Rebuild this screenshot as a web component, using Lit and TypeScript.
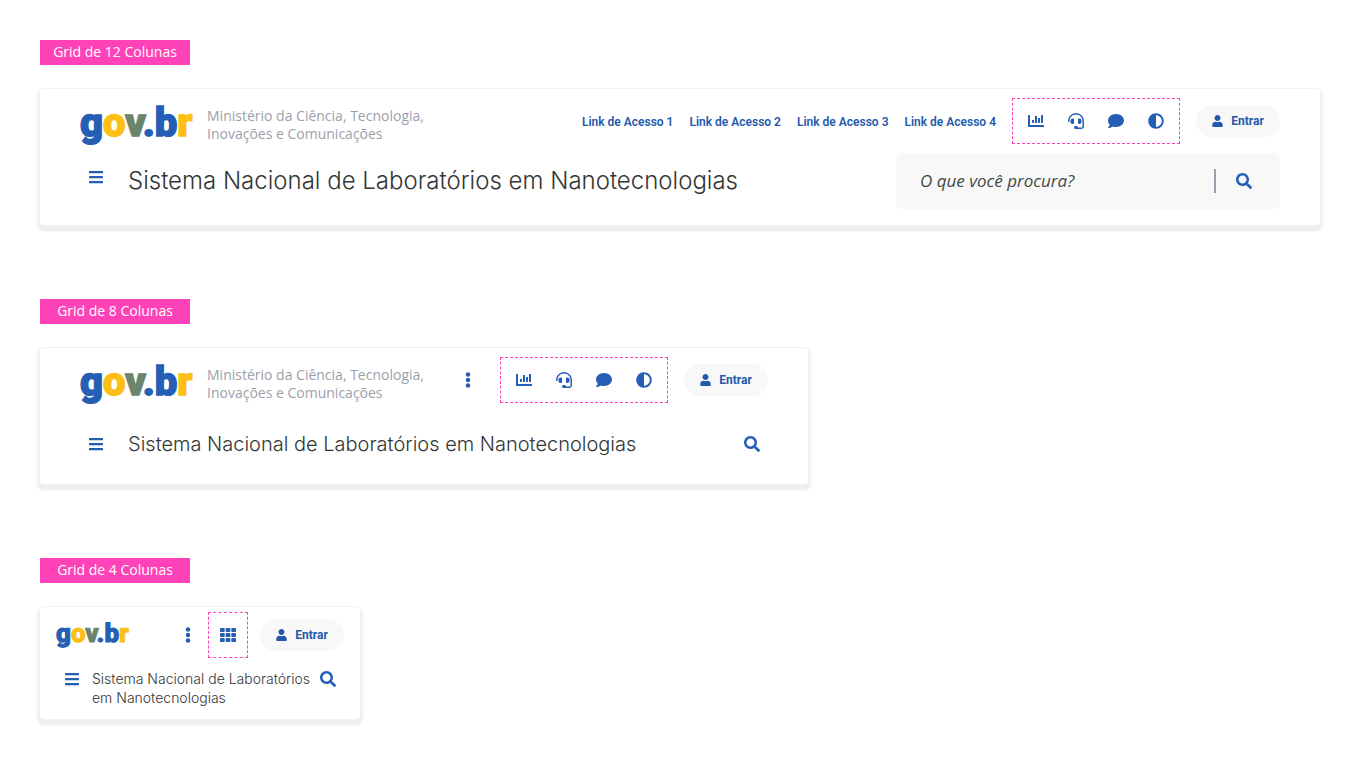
import { LitElement, html, css, svg } from "lit";
import { customElement, property } from "lit/decorators.js";
import { classMap } from "lit/directives/class-map.js";

type IconName =
  | "bars" | "dots" | "chart" | "headset" | "comment"
  | "contrast" | "user" | "search" | "grid";

const ICONS: Record<IconName, { width: number; shape: unknown }> = {
  bars: {
    width: 448,
    shape: svg`<rect y="60" width="448" height="72" rx="16"/><rect y="220" width="448" height="72" rx="16"/><rect y="380" width="448" height="72" rx="16"/>`,
  },
  dots: {
    width: 192,
    shape: svg`<circle cx="96" cy="80" r="72"/><circle cx="96" cy="256" r="72"/><circle cx="96" cy="432" r="72"/>`,
  },
  chart: {
    width: 512,
    shape: svg`<path d="M332.8 320h38.4c6.4 0 12.8-6.4 12.8-12.8V172.8c0-6.4-6.4-12.8-12.8-12.8h-38.4c-6.4 0-12.8 6.4-12.8 12.8v134.4c0 6.4 6.4 12.8 12.8 12.8zm96 0h38.4c6.4 0 12.8-6.4 12.8-12.8V76.8c0-6.4-6.4-12.8-12.8-12.8h-38.4c-6.4 0-12.8 6.4-12.8 12.8v230.4c0 6.4 6.4 12.8 12.8 12.8zm-288 0h38.4c6.4 0 12.8-6.4 12.8-12.8v-70.4c0-6.4-6.4-12.8-12.8-12.8h-38.4c-6.4 0-12.8 6.4-12.8 12.8v70.4c0 6.4 6.4 12.8 12.8 12.8zm96 0h38.4c6.4 0 12.8-6.4 12.8-12.8V108.8c0-6.4-6.4-12.8-12.8-12.8h-38.4c-6.4 0-12.8 6.4-12.8 12.8v198.4c0 6.4 6.4 12.8 12.8 12.8zM496 384H64V80c0-8.84-7.16-16-16-16H16C7.16 64 0 71.16 0 80v336c0 17.67 14.33 32 32 32h464c8.84 0 16-7.16 16-16v-32c0-8.84-7.16-16-16-16z"/>`,
  },
  headset: {
    width: 512,
    shape: svg`<path d="M192 208c0-17.67-14.33-32-32-32h-16c-35.35 0-64 28.65-64 64v48c0 35.35 28.65 64 64 64h16c17.67 0 32-14.33 32-32V208zm176 144c35.35 0 64-28.65 64-64v-48c0-35.35-28.65-64-64-64h-16c-17.67 0-32 14.33-32 32v112c0 17.67 14.33 32 32 32h16zM256 0C113.18 0 4.58 118.83 0 256v16c0 8.84 7.16 16 16 16h16c8.84 0 16-7.16 16-16v-16c0-114.69 93.31-208 208-208s208 93.31 208 208h-.12c.08 2.43.12 165.72.12 165.72 0 23.35-18.93 42.28-42.28 42.28H320c0-26.51-21.49-48-48-48h-32c-26.51 0-48 21.49-48 48s21.49 48 48 48h181.72c49.86 0 90.28-40.42 90.28-90.28V256C507.42 118.83 398.82 0 256 0z"/>`,
  },
  comment: {
    width: 512,
    shape: svg`<path d="M256 32C114.6 32 0 125.1 0 240c0 49.6 21.4 95 57 130.7C44.5 421.1 2.7 466 2.2 466.5c-2.2 2.3-2.8 5.7-1.5 8.7S4.8 480 8 480c66.3 0 116-31.8 140.6-51.4 32.7 12.3 69 19.4 107.4 19.4 141.4 0 256-93.1 256-208S397.4 32 256 32z"/>`,
  },
  contrast: {
    width: 512,
    shape: svg`<path d="M8 256c0 136.966 111.033 248 248 248s248-111.034 248-248S392.966 8 256 8 8 119.033 8 256zm248 184V72c101.705 0 184 82.311 184 184 0 101.705-82.311 184-184 184z"/>`,
  },
  user: {
    width: 448,
    shape: svg`<path d="M224 256c70.7 0 128-57.3 128-128S294.7 0 224 0 96 57.3 96 128s57.3 128 128 128zm89.6 32h-16.7c-22.2 10.2-46.9 16-72.9 16s-50.6-5.8-72.9-16h-16.7C60.2 288 0 348.2 0 422.4V464c0 26.5 21.5 48 48 48h352c26.5 0 48-21.5 48-48v-41.6c0-74.2-60.2-134.4-134.4-134.4z"/>`,
  },
  search: {
    width: 512,
    shape: svg`<path d="M505 442.7L405.3 343c-4.5-4.5-10.6-7-17-7H372c27.6-35.3 44-79.7 44-128C416 93.1 322.9 0 208 0S0 93.1 0 208s93.1 208 208 208c48.3 0 92.7-16.4 128-44v16.3c0 6.4 2.5 12.5 7 17l99.7 99.7c9.4 9.4 24.6 9.4 33.9 0l28.3-28.3c9.4-9.4 9.4-24.6.1-34zM208 336c-70.7 0-128-57.2-128-128 0-70.7 57.2-128 128-128 70.7 0 128 57.2 128 128 0 70.7-57.2 128-128 128z"/>`,
  },
  grid: {
    width: 512,
    shape: [32, 192, 352].map((y) =>
      [0, 181, 362].map((x) => svg`<rect x=${x} y=${y} width="150" height="128" rx="24"/>`)
    ),
  },
};

const icon = (name: IconName) => html`<svg
  class="icon icon-${name}"
  viewBox="0 0 ${ICONS[name].width} 512"
  aria-hidden="true"
>${ICONS[name].shape}</svg>`;

const iconButton = (name: IconName, label: string) =>
  html`<button class="icon-button" type="button" aria-label=${label}>${icon(name)}</button>`;

const TITLE = "Sistema Nacional de Laboratórios em Nanotecnologias";
const LINKS = [1, 2, 3, 4].map((n) => `Link de Acesso ${n}`);

@customElement("gov-logo")
export class GovLogo extends LitElement {
  static styles = css`
    :host { display: block; aspect-ratio: 111 / 40; }
    .mark { display: block; width: 100%; height: 100%; overflow: visible; }
    .letters {
      font: 900 40px Roboto, "Liberation Sans", sans-serif;
      stroke-width: 1.4;
      text-rendering: geometricPrecision;
    }
    .blue { fill: #255fb5; stroke: #255fb5; }
    .yellow { fill: #fdbf16; stroke: #fdbf16; }
    .green { fill: #6a856c; stroke: #6a856c; }
  `;

  render() {
    return html`<svg class="mark" viewBox="0 0 111 40" role="img" aria-label="gov.br">
      <text class="letters" x="0" y="31"
        ><tspan class="blue">g</tspan
        ><tspan class="yellow">o</tspan
        ><tspan class="green">v</tspan
        ><tspan class="blue">.b</tspan
        ><tspan class="yellow">r</tspan
      ></text>
    </svg>`;
  }
}

@customElement("site-header")
export class SiteHeader extends LitElement {
  @property() size: "large" | "medium" | "small" = "large";

  static styles = css`
    :host { display: block; }
    * { box-sizing: border-box; }
    .card {
      padding: 8px 40px 16px;
      border-radius: 4px;
      background: #fff;
      box-shadow: 0 0 0 1px #f2f2f2, 0 4px 0 2px #efefef, 0 3px 1px 4px #f8f8f8;
    }
    .top, .bottom, .brand, .actions, .links, .tools, .sign-in, .search, .icon-button {
      display: flex;
      align-items: center;
    }
    .top { min-height: 48px; justify-content: space-between; gap: 16px; }
    .brand { gap: 16px; align-self: flex-end; }
    .logo { width: 111px; }
    .ministry { margin: 0; font-size: 14px; line-height: 18px; color: #9b9fab; }
    .actions, .links { gap: 16px; }
    .link {
      padding-top: 2px;
      font: 600 12px/16px Roboto, sans-serif;
      color: #2359ab;
      text-decoration: none;
      white-space: nowrap;
    }
    .tools { height: 46px; padding: 0 7px; gap: 8px; border: 1px dashed #ff42b8; }
    .icon-button {
      flex: none;
      justify-content: center;
      width: 32px;
      height: 32px;
      padding: 0;
      border: 0;
      background: none;
      color: #255fb5;
      cursor: pointer;
    }
    .icon { display: block; height: 16px; fill: currentColor; }
    .icon-user { height: 12px; width: 11px; }
    .sign-in {
      flex: none;
      justify-content: center;
      min-width: 84px;
      height: 32px;
      padding: 0 12px;
      gap: 8px;
      border: 0;
      border-radius: 16px;
      background: #f8f8f8;
      font: 700 12px/16px Roboto, sans-serif;
      color: #2359ab;
      cursor: pointer;
    }
    .bottom { min-height: 56px; margin-top: 8px; gap: 16px; }
    .bottom > .icon-button:first-child { align-self: flex-start; margin-top: 8px; }
    .title {
      flex: 1;
      margin: 0;
      font: 300 24px/32px Inter, "Open Sans", sans-serif;
      color: #333634;
    }
    .search {
      width: 32%;
      height: 56px;
      padding: 0 20px 0 24px;
      gap: 12px;
      border-radius: 6px;
      background: #f8f8f8;
    }
    .field {
      flex: 1;
      min-width: 0;
      height: 24px;
      padding: 0;
      border: 0;
      border-right: 2px solid #99a1b0;
      outline: 0;
      background: none;
      font: italic 17px/24px "Open Sans", sans-serif;
      color: #3f4843;
    }
    .field::placeholder { color: #3f4843; opacity: 1; }

    .medium .bottom { min-height: 48px; margin-top: 16px; }
    .medium .bottom > .icon-button:first-child { align-self: center; margin-top: 0; }
    .medium .title { font-size: 20px; }

    .small { padding: 4px 16px 12px; }
    .small .brand { align-self: center; }
    .small .logo { width: 72px; }
    .small .actions { gap: 4px; }
    .small .tools { padding: 0 3px; }
    .small .sign-in { margin-left: 8px; }
    .small .bottom { min-height: 0; margin-top: 4px; gap: 4px; align-items: flex-start; }
    .small .bottom > .icon-button:first-child { margin-top: 0; }
    .small .bottom > .icon-button:last-child { margin-left: -4px; }
    .small .title { padding-top: 6px; font-size: 14px; line-height: 19px; }
  `;

  render() {
    const large = this.size === "large";
    const small = this.size === "small";
    return html`<header class=${classMap({ card: true, [this.size]: true })}>
      <div class="top">
        <div class="brand">
          <gov-logo class="logo"></gov-logo>
          ${small ? "" : html`<p class="ministry">Ministério da Ciência, Tecnologia,<br />Inovações e Comunicações</p>`}
        </div>
        <div class="actions">
          ${large
            ? html`<nav class="links" aria-label="Acesso rápido">
                ${LINKS.map((text) => html`<a class="link" href="#">${text}</a>`)}
              </nav>`
            : iconButton("dots", "Links de acesso")}
          <div class="tools">
            ${small
              ? iconButton("grid", "Funcionalidades")
              : [
                  iconButton("chart", "Indicadores"),
                  iconButton("headset", "Atendimento"),
                  iconButton("comment", "Mensagens"),
                  iconButton("contrast", "Contraste"),
                ]}
          </div>
          <button class="sign-in" type="button">${icon("user")}<span>Entrar</span></button>
        </div>
      </div>
      <div class="bottom">
        ${iconButton("bars", "Menu")}
        <h2 class="title">${TITLE}</h2>
        ${large
          ? html`<form class="search" role="search">
              <input class="field" type="text" aria-label="O que você procura?" placeholder="O que você procura?" />
              ${iconButton("search", "Buscar")}
            </form>`
          : iconButton("search", "Buscar")}
      </div>
    </header>`;
  }
}

@customElement("app-root")
export class AppRoot extends LitElement {
  static styles = css`
    :host {
      display: block;
      min-height: 100vh;
      box-sizing: border-box;
      padding: 40px;
      background: #fff;
      font-family: "Open Sans", "Noto Sans", sans-serif;
    }
    .examples { display: grid; gap: 74px; }
    .tag {
      width: 150px;
      margin: 0 0 24px;
      padding-bottom: 2px;
      background: #ff42b8;
      font-size: 14px;
      line-height: 23px;
      font-weight: 400;
      text-align: center;
      color: #fff;
    }
    .medium { max-width: 768px; }
    .small { max-width: 320px; }
  `;

  render() {
    return html`<main class="examples">
      <section>
        <h1 class="tag">Grid de 12 Colunas</h1>
        <site-header size="large"></site-header>
      </section>
      <section>
        <h1 class="tag">Grid de 8 Colunas</h1>
        <site-header class="medium" size="medium"></site-header>
      </section>
      <section>
        <h1 class="tag">Grid de 4 Colunas</h1>
        <site-header class="small" size="small"></site-header>
      </section>
    </main>`;
  }
}
